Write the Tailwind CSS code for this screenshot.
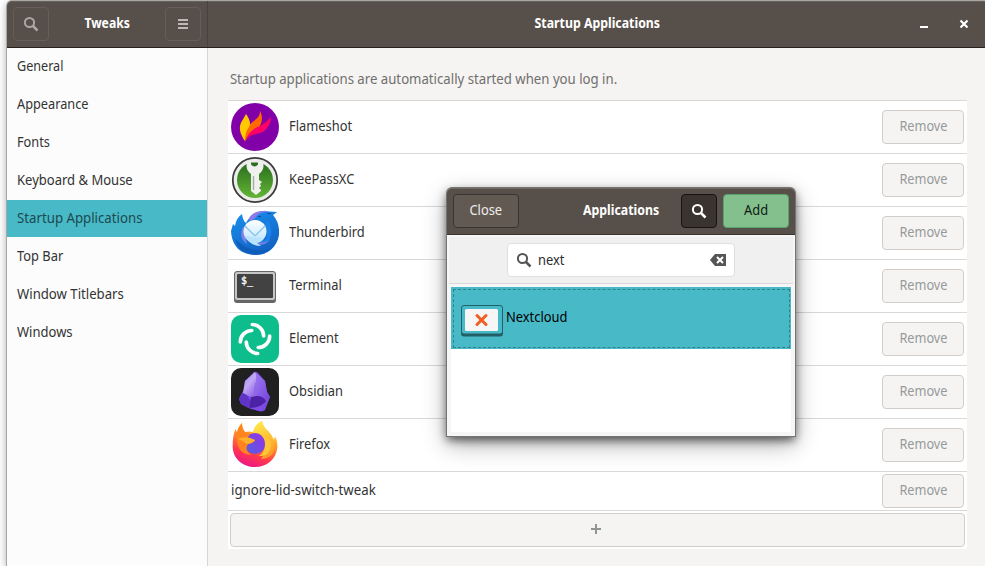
<!DOCTYPE html>
<html lang="en">
<head>
<meta charset="utf-8">
<title>Tweaks</title>
<script src="https://cdn.jsdelivr.net/npm/@tailwindcss/browser@4"></script>
</head>
<body class="relative h-[566px] w-[985px] overflow-hidden bg-white pl-[7px] pt-px font-['Noto_Sans','Open_Sans',sans-serif] text-[14px] leading-5 text-[#333]">
<main class="flex h-[565px] w-[978px] flex-col rounded-tl-[5px] bg-[#f5f4f2] shadow-[0_0_0_1px_#aaa8a5,0_2px_8px_#0006]">
  <header class="flex h-[47px] shrink-0 rounded-tl-[5px] border-b border-[#2b2020] bg-[#574f4a] font-bold text-white shadow-[inset_0_1px_0_#68605b]">
    <div class="flex w-[201px] items-center justify-between border-r border-[#49413d] pl-[6px] pr-[6px]">
      <button class="flex h-[34px] w-[36px] items-center justify-center rounded border border-[#665e58]">
        <svg width="16" height="16" viewBox="0 0 16 16" fill="none" stroke="#aaa7a4"><circle cx="6.5" cy="6.5" r="4.6" stroke-width="2"/><path d="M10 10l4.5 4.5" stroke-width="2.5"/></svg>
      </button>
      <span class="mb-[2px] scale-x-[0.87]">Tweaks</span>
      <button class="flex h-[34px] w-[36px] items-center justify-center rounded border border-[#665e58]">
        <svg width="10" height="10" viewBox="0 0 10 10" fill="#bcb9b7"><path d="M0 0h10v2H0zM0 4h10v2H0zM0 8h10v2H0z"/></svg>
      </button>
    </div>
    <div class="relative flex flex-1 items-center justify-center">
      <span class="mb-[2px] mr-[-2px] scale-x-[0.88]">Startup Applications</span>
      <div class="absolute right-[16px] top-[18px] flex gap-[30px]">
        <svg width="10" height="10" viewBox="0 0 10 10" fill="#fff"><path d="M1 7h8v2H1z"/></svg>
        <svg width="10" height="10" viewBox="0 0 10 10" fill="none" stroke="#fff" stroke-width="2.2"><path d="M1.5 1.5l7 7m0-7l-7 7"/></svg>
      </div>
    </div>
  </header>
  <div class="flex min-h-0 flex-1">
    <nav class="w-[201px] shrink-0 border-r border-[#d8d6d4] bg-[#fcfcfc] [&>div]:mb-px [&>div]:flex [&>div]:h-[37px] [&>div]:items-center [&>div]:pb-[2px] [&>div]:pl-[10px] [&_span]:origin-left">
      <div><span class="scale-x-[0.9]">General</span></div>
      <div><span class="scale-x-[0.91]">Appearance</span></div>
      <div><span class="scale-x-[0.91]">Fonts</span></div>
      <div><span class="scale-x-[0.93]">Keyboard &amp; Mouse</span></div>
      <div class="bg-[#48b9c7] text-[#1d4a50]"><span class="scale-x-[0.945]">Startup Applications</span></div>
      <div><span class="scale-x-[0.92]">Top Bar</span></div>
      <div><span class="scale-x-[0.94]">Window Titlebars</span></div>
      <div><span class="scale-x-[0.93]">Windows</span></div>
    </nav>
    <section class="flex-1 pl-[20px] pt-[21px]">
      <p class="h-[31px] origin-left scale-x-[0.942] whitespace-nowrap pl-[2px] text-[#706f6e]">Startup applications are automatically started when you log in.</p>
      <div class="w-[739px] [&>div]:flex [&>div]:items-center [&>div]:border-t [&>div]:border-[#d8d8d8] [&>div]:bg-white [&>div]:pl-[3px] [&>div]:pr-[3px] [&>div>span]:mb-[2px] [&>div>span]:flex-1 [&>div>span]:origin-left [&>div>span]:scale-x-[0.92] [&>div>svg]:mr-[10px] [&>div>button]:h-[34px] [&>div>button]:w-[82px] [&>div>button]:rounded [&>div>button]:border [&>div>button]:border-[#d2cdc9] [&>div>button]:bg-[#f5f4f3] [&>div>button]:pb-[2px] [&>div>button]:text-[#979a9a] [&>div>button>span]:inline-block [&>div>button>span]:scale-x-[0.91]">
        <div class="h-[53px]">
          <svg width="48" height="48" viewBox="0 0 48 48"><circle cx="24" cy="24" r="24" fill="#8200a8"/><path d="M14 38C9 31 7 24 11 18L15 11C18 15 20 20 19 25Q20 31 14 38" fill="#ffc800"/><path d="M14 38Q14 29 18 24C20 17 29 17 29 8C33 16 30 21 28 24Q20 28 14 38" fill="#ff6a00"/><path d="M14 38Q18 27 29 23Q35 20 40 14Q40 20 36 25C32 33 20 28 14 38" fill="#ff0066"/></svg>
          <span>Flameshot</span><button><span>Remove</span></button>
        </div>
        <div class="h-[53px]">
          <svg width="48" height="48" viewBox="0 0 48 48"><defs><linearGradient id="kg" x2="0" y2="1"><stop stop-color="#286b1d"/><stop offset="1" stop-color="#63b536"/></linearGradient></defs><circle cx="24" cy="24" r="22.2" fill="#ececea" stroke="#3d3d3d" stroke-width="1.8"/><circle cx="24" cy="24" r="18" fill="url(#kg)"/><path d="M16 6h16q2 8-4 12v6l3 2-2 2 1 2-2 2 2 2v1l-5 4-5-4V18q-6-4-4-12z" fill="#f0f0ee"/><path d="M20 6.500h7v2q-3.500 4-7 0z" fill="#2c6d20"/><path d="M22.500 20v14" stroke="#a6aea3" stroke-width="1.4"/></svg>
          <span>KeePassXC</span><button><span>Remove</span></button>
        </div>
        <div class="h-[53px]">
          <svg width="48" height="48" viewBox="0 0 48 48"><defs><linearGradient id="tb" x2=".5" y2="1"><stop stop-color="#1992ef"/><stop offset="1" stop-color="#1263c5"/></linearGradient><linearGradient id="te" x2="0" y2="1"><stop stop-color="#fff"/><stop offset="1" stop-color="#b8e4ff"/></linearGradient></defs><path d="M0 22L2 15L4 17Q5 9 11 5Q12 12 15 14Q20 4 31 2L46 3L42 6Q49 14 48 26C46 39 35 47 23 46C10 45 1 38 0 22" fill="url(#tb)"/><path d="M17 11Q21 2 32 2Q35 1 37 3Q28 3 25 8Q22 12 17 11" fill="#8b7be8"/><path d="M4 30Q7 42 18 44Q31 47 40 39Q27 44 17 39Q8 34 4 30Z" fill="#0f5db9"/><path d="M33 16Q38 24 35 30L25 35L36 33Q44 25 37 11Z" fill="#1d82e7"/><path d="M12 18Q7 29 16 35Q13 25 15 18Z" fill="#7f80e8"/><path d="M26 33Q36 35 40 29Q37 35 29 36Z" fill="#7f80e8"/><circle cx="24" cy="22.500" r="11.500" fill="url(#te)"/><path d="M14 27Q19 37 30 37L25 33L33 29Z" fill="#b9e2fc"/><path d="M14 17L23 26Q24 27 25 26L34 17" fill="none" stroke="#8bbfe7" stroke-width="1.2"/><path d="M27 7.500h3M36 4.500h4" stroke="#0b4b9e"/></svg>
          <span class="scale-x-[0.93]">Thunderbird</span><button><span>Remove</span></button>
        </div>
        <div class="h-[53px]">
          <svg width="48" height="48" viewBox="0 0 48 48"><rect x="3" y="10" width="42" height="31" rx="3" fill="#666"/><rect x="3.500" y="9.500" width="41" height="29" rx="2.500" fill="#c5c5c5" stroke="#656565"/><rect x="6" y="12" width="36" height="24" rx="1" fill="#424242"/><text x="10" y="22" font-family="DejaVu Sans Mono, monospace" font-size="10" textLength="12" lengthAdjust="spacingAndGlyphs" fill="#fff" stroke="#fff" stroke-width=".3">$_</text></svg>
          <span>Terminal</span><button><span>Remove</span></button>
        </div>
        <div class="h-[53px]">
          <svg width="48" height="48" viewBox="0 0 48 48"><rect width="48" height="48" rx="10" fill="#0dbd8b"/><g fill="none" stroke="#fff" stroke-width="3.6" stroke-linecap="round"><path d="M21.300 9.500A11.500 11.500 0 0 1 32.700 21"/><path d="M38.700 21A11.500 11.500 0 0 1 27.200 32.500"/><path d="M26.700 38.500A11.500 11.500 0 0 1 15.300 27"/><path d="M9.300 27A11.500 11.500 0 0 1 20.800 15.500"/></g></svg>
          <span>Element</span><button><span>Remove</span></button>
        </div>
        <div class="h-[53px]">
          <svg width="48" height="48" viewBox="0 0 48 48"><defs><linearGradient id="oa" x2=".7" y2="1"><stop stop-color="#9b7ced"/><stop offset=".5" stop-color="#c1aaf4"/><stop offset="1" stop-color="#9365e7"/></linearGradient><linearGradient id="ob" x2="1" y2="1"><stop stop-color="#a17df3"/><stop offset="1" stop-color="#7442dc"/></linearGradient></defs><rect width="48" height="48" rx="10" fill="#202020"/><path d="M23 4Q25 3 27 5L34 13L36 24L39 29L34 42Q32 44 29 43L20 41L10 36L8 31L13 21L14 13Z" fill="#794fe0"/><path d="M24 4Q27 8 24 17Q21 21 26 29L20 29L12 25L14 13Z" fill="url(#oa)"/><path d="M25 5L34 13L36 24L39 29L35 33Q31 28 25 28Q21 21 25 15Z" fill="url(#ob)"/><path d="M12 25Q19 28 19 35L17 40L10 36L8 31Z" fill="#6033c7"/><path d="M20 29Q31 26 35 33L32 42Q31 44 28 43L18 40Z" fill="#4d22a5"/><path d="M18 40Q30 40 35 33L32 42Q31 44 28 43Z" fill="#814ce5"/></svg>
          <span>Obsidian</span><button><span>Remove</span></button>
        </div>
        <div class="h-[53px]">
          <svg width="48" height="48" viewBox="0 0 48 48"><defs><linearGradient id="fa" x1=".75" x2=".35" y2="1"><stop stop-color="#fff44f"/><stop offset=".4" stop-color="#ff9d20"/><stop offset=".75" stop-color="#ff3750"/><stop offset="1" stop-color="#eb1587"/></linearGradient><linearGradient id="fb" x1="1" x2="0" y2="1"><stop stop-color="#9c2ee8"/><stop offset="1" stop-color="#4c64e0"/></linearGradient><linearGradient id="fc" x2=".3" y2="1"><stop stop-color="#fff24e"/><stop offset="1" stop-color="#ff9c27"/></linearGradient></defs><path d="M1.700 26Q1.500 15 4.500 8L6 12Q7 6 11 2Q11 8 14 11Q18 10 22 11Q24 3 31 0Q32 6 37 10Q41 14 43 19L44 15Q47 21 46.300 27C45 39 35 46 24 46C12 46 2 38 1.700 26" fill="url(#fa)"/><path d="M22 12Q24 3 31 0Q32 6 37 10Q46 20 43 30Q39 38 30 38Q37 30 32 20Z" fill="url(#fc)"/><circle cx="24" cy="22.500" r="10.500" fill="url(#fb)"/><path d="M4.500 8L6 12Q7 6 11 2Q11 8 14 11L19 12L17 17L24 19Q23 22 17 23Q13 29 20 34Q7 33 6 19Z" fill="#ff8420"/><path d="M7 18Q15 14 24 19Q22 22 16 23Q12 20 7 18" fill="#ffb029"/><path d="M27 12Q34 16 34 23Q34 31 28 35Q40 36 40 22L36 15L35 19Q32 14 27 12Z" fill="#ffc536"/></svg>
          <span>Firefox</span><button><span>Remove</span></button>
        </div>
        <div class="h-[39px]"><span class="!scale-x-[0.945]">ignore-lid-switch-tweak</span><button><span>Remove</span></button></div>
      </div>
      <div class="h-[39px] w-[739px] border-t border-[#d8d8d8] bg-white px-[2px] pt-[2px]">
        <button class="flex h-[34px] w-full items-center justify-center rounded border border-[#d2cdc9] bg-[#f5f4f3] pb-[2px] pr-[3px]">
          <svg width="10" height="10" viewBox="0 0 10 10" fill="#929595"><path d="M4 0h2v4h4v2H6v4H4V6H0V4h4z"/></svg>
        </button>
      </div>
    </section>
  </div>
</main>
<dialog open class="absolute left-[447px] top-[188px] m-0 flex h-[248px] w-[348px] flex-col rounded-t-[5px] bg-[#f6f6f6] p-0 text-black shadow-[0_0_0_1px_#77736f,0_4px_10px_#0009,0_8px_24px_#0005]">
  <header class="relative flex h-[47px] shrink-0 items-center justify-between rounded-t-[5px] border-b border-[#3b3430] bg-[#574f4a] px-[6px] shadow-[inset_0_1px_0_#706963]">
    <button class="h-[34px] w-[66px] rounded border border-[#3c3330] bg-[#635953] pb-[2px] text-[#ededeb]"><span class="inline-block scale-x-[0.92]">Close</span></button>
    <span class="absolute left-[136px] top-[12px] origin-left scale-x-[0.88] font-bold text-white">Applications</span>
    <div class="flex gap-[6px]">
      <button class="flex h-[34px] w-[36px] items-center justify-center rounded border border-[#171412] bg-[#3a3430]">
        <svg width="16" height="16" viewBox="0 0 16 16" fill="none" stroke="#fff"><circle cx="6.500" cy="6.500" r="4.600" stroke-width="2"/><path d="M10 10l4.500 4.500" stroke-width="2.500"/></svg>
      </button>
      <button class="h-[34px] w-[66px] rounded border border-[#58a56b] bg-[#84bf8e] pb-[2px] text-[#101b12]"><span class="inline-block scale-x-[0.92]">Add</span></button>
    </div>
  </header>
  <div class="mx-[2px] mt-[2px] flex h-[47px] justify-center border-b border-[#d9d9d9] bg-[#f0f0f0] pt-[6px]">
    <div class="flex h-[34px] w-[228px] items-center rounded border border-[#dfdfdf] bg-white pl-[8px] pr-[8px] text-[#2d2d2d]">
      <svg width="16" height="16" viewBox="0 0 16 16" fill="none" stroke="#555"><circle cx="6.500" cy="6.500" r="4.600" stroke-width="2"/><path d="M10 10l4.500 4.500" stroke-width="2.500"/></svg>
      <span class="mb-px ml-[6px] flex-1 origin-left scale-x-[0.92]">next</span>
      <svg width="16" height="12" viewBox="0 0 16 12"><path d="M0 6L5 0h11v12H5z" fill="#555"/><path d="M7 3l6 6m0-6l-6 6" stroke="#fff" stroke-width="2"/></svg>
    </div>
  </div>
  <div class="mx-[4px] mt-[3px] h-[145px] bg-white">
    <div class="h-[62px] bg-[#48b9c7] p-[2px]">
      <div class="flex h-[59px] w-[337px] border border-dashed border-[#30828d] pl-[7px] pt-[15px]">
        <svg width="42" height="32" viewBox="0 0 42 32"><rect y="2" width="42" height="29.500" rx="3" fill="#235f67"/><rect x=".5" y=".5" width="41" height="28.500" rx="2.500" fill="#48b9c7" stroke="#235f67"/><rect x="4" y="4" width="33" height="22" rx="1.500" fill="#f6f6f6"/><path d="M16 10.500l9 9m0-9l-9 9" stroke="#f15d22" stroke-width="3" stroke-linecap="round"/></svg>
        <span class="ml-[3px] mt-[2px] origin-left scale-x-[0.92]">Nextcloud</span>
      </div>
    </div>
  </div>
</dialog>
</body>
</html>
